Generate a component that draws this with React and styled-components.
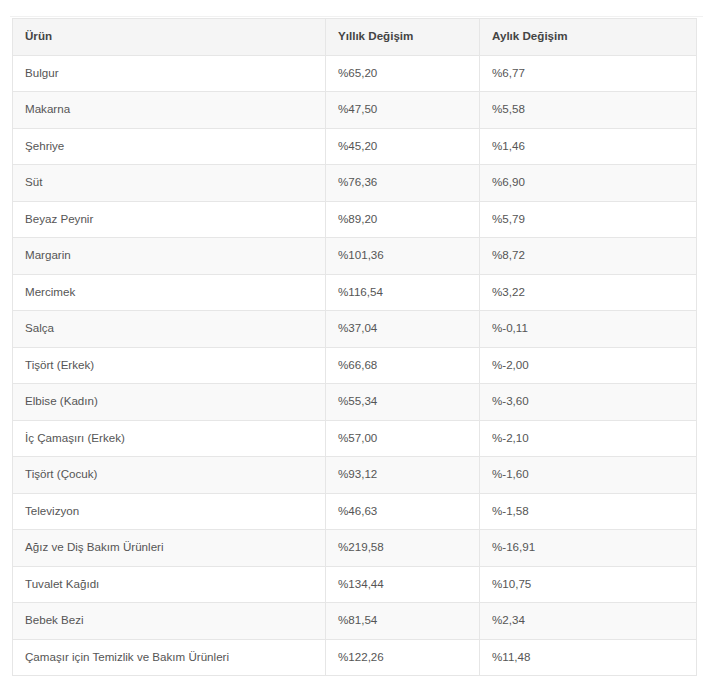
import styled, { createGlobalStyle } from "styled-components";

const GlobalStyle = createGlobalStyle`
  body {
    margin: 0;
    background: #ffffff;
    font-family: "Liberation Sans", Arial, sans-serif;
  }
`;

const rows = [
  ["Bulgur", "%65,20", "%6,77"],
  ["Makarna", "%47,50", "%5,58"],
  ["Şehriye", "%45,20", "%1,46"],
  ["Süt", "%76,36", "%6,90"],
  ["Beyaz Peynir", "%89,20", "%5,79"],
  ["Margarin", "%101,36", "%8,72"],
  ["Mercimek", "%116,54", "%3,22"],
  ["Salça", "%37,04", "%-0,11"],
  ["Tişört (Erkek)", "%66,68", "%-2,00"],
  ["Elbise (Kadın)", "%55,34", "%-3,60"],
  ["İç Çamaşırı (Erkek)", "%57,00", "%-2,10"],
  ["Tişört (Çocuk)", "%93,12", "%-1,60"],
  ["Televizyon", "%46,63", "%-1,58"],
  ["Ağız ve Diş Bakım Ürünleri", "%219,58", "%-16,91"],
  ["Tuvalet Kağıdı", "%134,44", "%10,75"],
  ["Bebek Bezi", "%81,54", "%2,34"],
  ["Çamaşır için Temizlik ve Bakım Ürünleri", "%122,26", "%11,48"],
];

function App() {
  return (
    <>
      <GlobalStyle />
      <Page>
        <Frame>
          <Table>
            <colgroup>
              <col style={{ width: "313px" }} />
              <col style={{ width: "154px" }} />
              <col style={{ width: "217px" }} />
            </colgroup>
            <thead>
              <Row>
                <HeadCell>Ürün</HeadCell>
                <HeadCell>Yıllık Değişim</HeadCell>
                <HeadCell>Aylık Değişim</HeadCell>
              </Row>
            </thead>
            <tbody>
              {rows.map((r, i) => (
                <Row key={r[0]} striped={i % 2 === 1}>
                  <Cell>{r[0]}</Cell>
                  <Cell>{r[1]}</Cell>
                  <Cell>{r[2]}</Cell>
                </Row>
              ))}
            </tbody>
          </Table>
        </Frame>
      </Page>
    </>
  );
}

const Page = styled.div`
  padding: 16px 15px 0 10px;
`;

const Frame = styled.div`
  border-top: 1px solid #f1f1f1;
  padding: 1px 6px 0 2px;
`;

const Table = styled.table`
  border-collapse: collapse;
  table-layout: fixed;
  width: 684px;
  font-size: 11.6px;
  color: #555555;
`;

const Row = styled.tr.withConfig({ shouldForwardProp: (p) => p !== "striped" })`
  height: 36.5px;
  background: ${(p) => (p.striped ? "#f9f9f9" : "#ffffff")};
`;

const HeadCell = styled.th`
  background: #f5f5f5;
  border: 1px solid #e6e6e6;
  padding: 0 12px 2px;
  text-align: left;
  font-weight: bold;
  color: #444444;
`;

const Cell = styled.td`
  border: 1px solid #e6e6e6;
  padding: 0 12px 2px;
`;

export default App;
